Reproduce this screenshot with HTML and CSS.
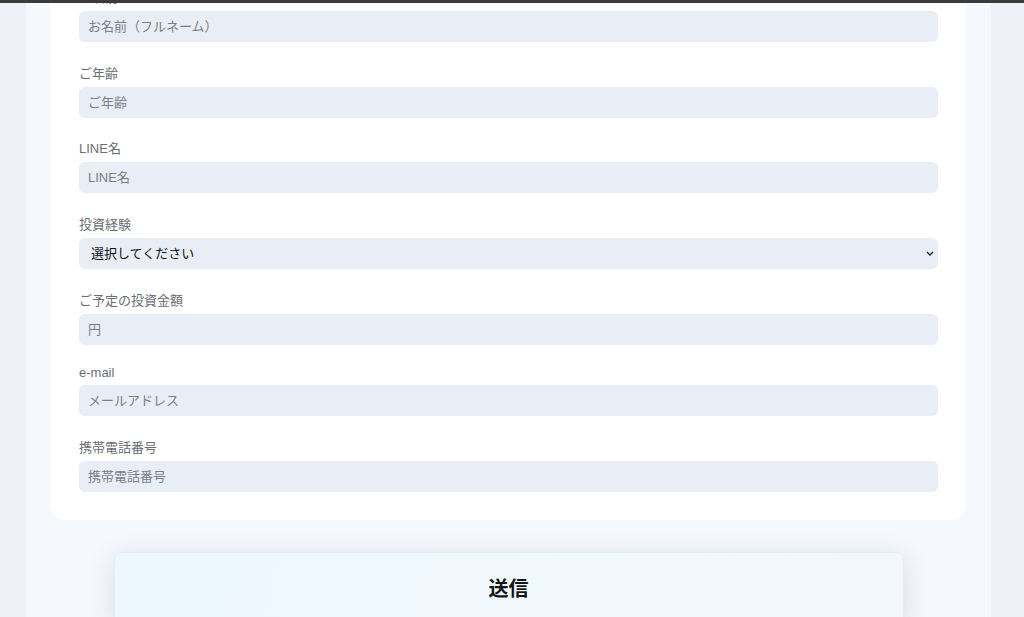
FILE: index.html
```html
<!DOCTYPE html>
<html lang="ja">
<head>
<meta charset="utf-8">
<title>お問い合わせフォーム</title>
<link rel="stylesheet" href="styles.css">
</head>
<body>
<div class="topbar"></div>
<div class="page">
  <main class="column">
    <form class="card">
      <div class="field">
        <label class="label">お名前</label>
        <input class="input" type="text" placeholder="お名前（フルネーム）">
      </div>
      <div class="field">
        <label class="label">ご年齢</label>
        <input class="input" type="text" placeholder="ご年齢">
      </div>
      <div class="field">
        <label class="label">LINE名</label>
        <input class="input" type="text" placeholder="LINE名">
      </div>
      <div class="field">
        <label class="label">投資経験</label>
        <select class="input select">
          <option>選択してください</option>
          <option>なし</option>
          <option>1年未満</option>
          <option>1年以上</option>
        </select>
      </div>
      <div class="field">
        <label class="label">ご予定の投資金額</label>
        <input class="input" type="text" placeholder="円">
      </div>
      <div class="field">
        <label class="label">e-mail</label>
        <input class="input" type="email" placeholder="メールアドレス">
      </div>
      <div class="field">
        <label class="label">携帯電話番号</label>
        <input class="input" type="tel" placeholder="携帯電話番号">
      </div>
    </form>
    <div class="actions">
      <button class="submit" type="button">送信</button>
    </div>
  </main>
</div>
</body>
</html>
```
FILE: styles.css
```css
html, body {
  margin: 0;
  padding: 0;
  height: 100%;
}
body {
  background: #eef2f8;
  font-family: "Liberation Sans", "Noto Sans CJK JP", sans-serif;
  overflow: hidden;
}
.topbar {
  position: fixed;
  top: 0;
  left: 0;
  right: 0;
  height: 3px;
  background: #3b3b3b;
  z-index: 10;
}
.page {
  display: flex;
  min-height: 100%;
}
.column {
  margin-left: 26px;
  width: 965px;
  background: #f5f8fd;
  min-height: 100%;
  display: flex;
  flex-direction: column;
}
.card {
  margin: -41px 0 0 24px;
  width: 916px;
  box-sizing: border-box;
  background: #ffffff;
  border-radius: 16px;
  padding: 28px 28px 7px 29px;
}
.field {
  display: flex;
  flex-direction: column;
  gap: 5px;
  margin-bottom: 20.7px;
}
.label {
  font-size: 13px;
  color: #6a6e74;
}
.input {
  display: block;
  width: 100%;
  box-sizing: border-box;
  height: 31px;
  border: none;
  outline: none;
  border-radius: 6px;
  background: #e8edf6;
  padding: 0 9px;
  font-family: "Liberation Sans", "Noto Sans CJK JP", sans-serif;
  font-size: 13px;
  color: #222;
}
.input::placeholder {
  color: #7b7e84;
}
.select {
  -webkit-appearance: none;
  appearance: none;
  padding: 0 20px 0 12px;
  color: #111;
  font-weight: 400;
  background-image: url("data:image/svg+xml;utf8,<svg xmlns='http://www.w3.org/2000/svg' width='8' height='5' viewBox='0 0 8 5'><path d='M1 1l3 3 3-3' fill='none' stroke='%23222' stroke-width='1.4'/></svg>");
  background-repeat: no-repeat;
  background-position: right 4px center;
  background-size: 8px 5px;
}
.actions {
  display: flex;
  justify-content: center;
  padding-top: 32px;
}
.submit {
  width: 790px;
  height: 72px;
  border: 1px solid #e4edf4;
  border-radius: 8px;
  background: linear-gradient(100deg, #ecf8fe 0%, #f1f8fe 60%, #f3f7fd 100%);
  box-shadow: 0 6px 28px rgba(40, 50, 70, 0.14);
  font-family: "Noto Sans CJK JP", sans-serif;
  font-size: 20px;
  font-weight: 700;
  color: #151515;
  padding: 0;
  cursor: pointer;
}
```
